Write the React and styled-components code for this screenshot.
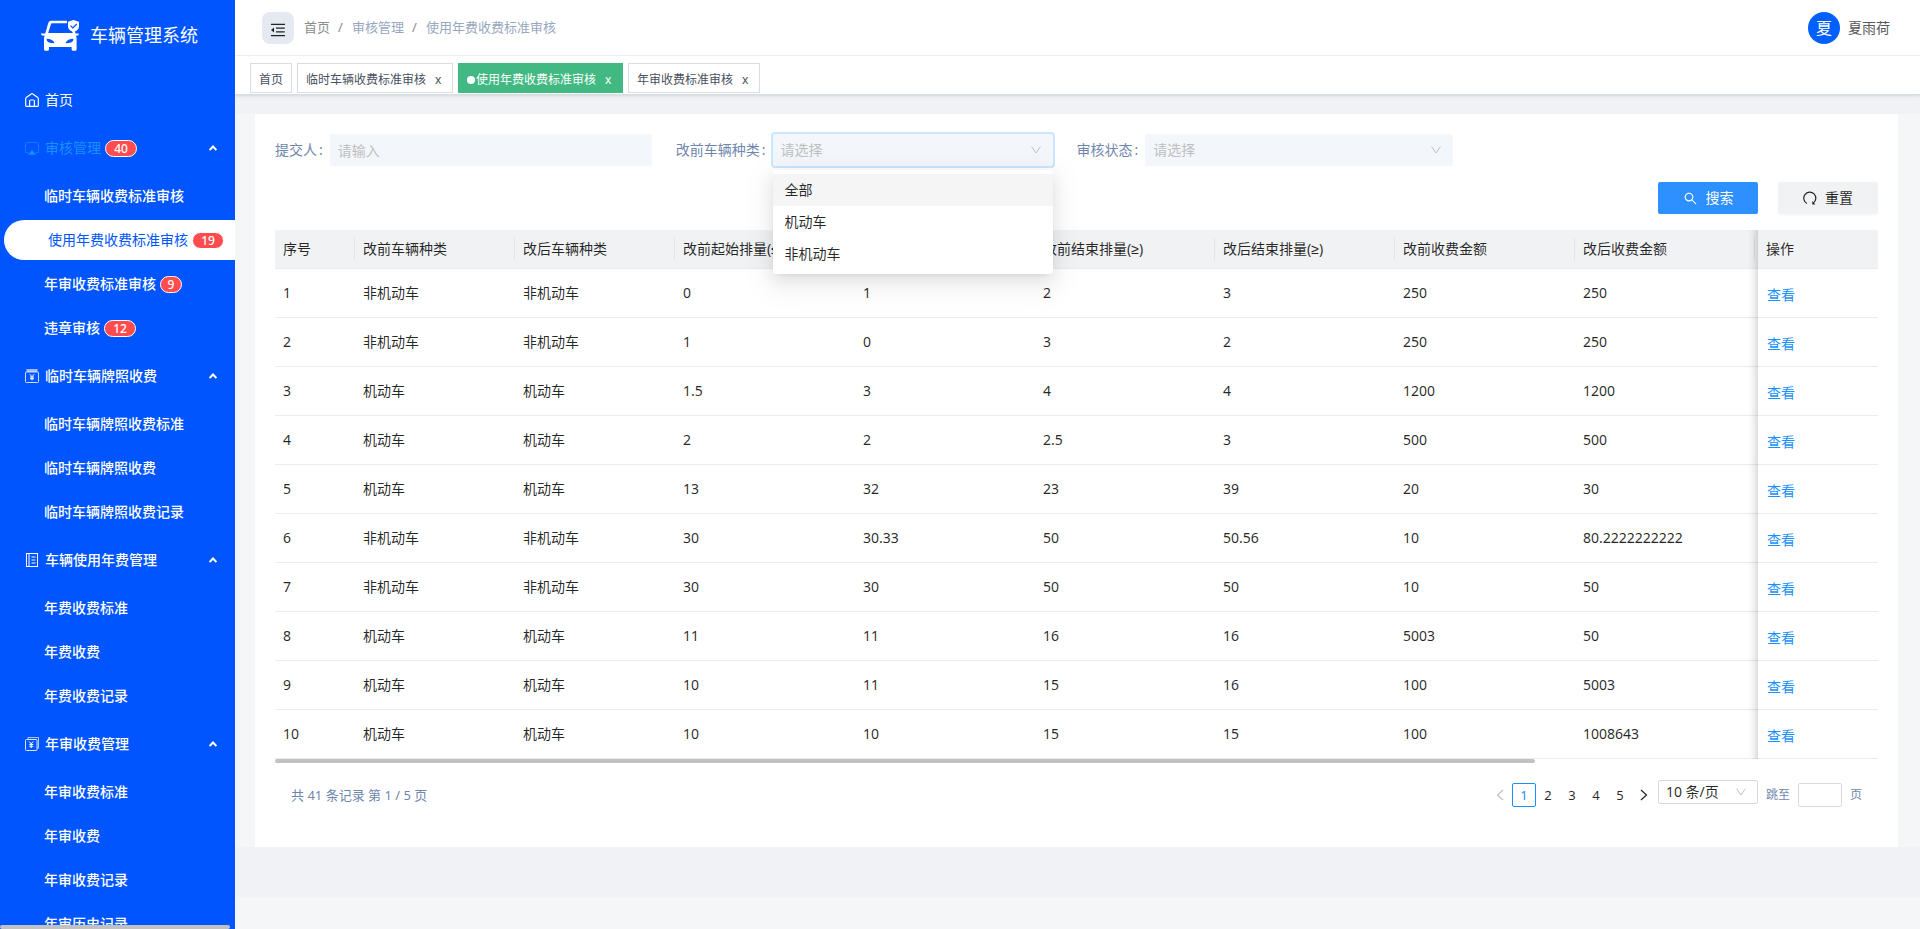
import React from 'react';
import styled, { createGlobalStyle, css } from 'styled-components';
import { AiOutlineMenuFold, AiOutlineSearch } from 'react-icons/ai';

const Global = createGlobalStyle`
  *, *::before, *::after { box-sizing: border-box; }
  body {
    margin: 0;
    background: #f5f6f8;
    color: rgba(0, 0, 0, 0.85);
    font: 14px/22px "Noto Sans", "Liberation Sans", "Noto Sans CJK SC", sans-serif;
  }
  button, input, select { font: inherit; color: inherit; margin: 0; }
  ul { list-style: none; margin: 0; padding: 0; }
  a { color: inherit; text-decoration: none; }
`;

const Page = styled.div`
  display: flex;
  align-items: flex-start;
  min-height: 100vh;
`;

/* ---------- sidebar ---------- */
const Sidebar = styled.aside`
  position: sticky;
  top: 0;
  flex: 0 0 235px;
  height: 100vh;
  overflow: hidden;
  background: #0055ff;
  color: #fff;
`;
const Brand = styled.div`
  display: flex;
  align-items: center;
  gap: 11px;
  height: 70px;
  padding-left: 41px;
  font-size: 18px;
  line-height: 24px;
`;
const Nav = styled.nav`
  display: flex;
  flex-direction: column;
  gap: 8px;
  padding-top: 10px;
  font-weight: 500;
`;
const TopLink = styled.a`
  display: flex;
  align-items: center;
  height: 40px;
  padding-left: 25px;
  gap: 6px;
  font-weight: 400;
`;
const GroupButton = styled.button`
  display: flex;
  align-items: center;
  gap: 6px;
  width: 100%;
  height: 40px;
  padding: 0 18px 0 25px;
  border: 0;
  background: none;
  color: ${(p) => (p.$current ? '#1890ff' : '#fff')};
  font-weight: ${(p) => (p.$current ? 400 : 500)};
  text-align: left;
`;
const GroupText = styled.span`
  display: flex;
  flex: 1;
  align-items: center;
  gap: 4px;
`;
const SubList = styled.ul`
  display: flex;
  flex-direction: column;
  gap: 4px;
  padding-top: 8px;
`;
const SubLink = styled.a`
  display: flex;
  align-items: center;
  gap: 4px;
  height: 40px;
  padding-left: 44px;
  white-space: nowrap;
  ${(p) => p.$active && css`
    margin-left: 4px;
    border-radius: 20px 0 0 20px;
    background: #fff;
    color: #0055ff;
    font-weight: 400;
  `}
`;
const Count = styled.span`
  min-width: ${(p) => (p.$wide ? 32 : 22)}px;
  height: 17px;
  border: 1px solid #fff;
  border-radius: 9px;
  background: #ff4d4f;
  color: #fff;
  font-size: 12px;
  font-weight: 500;
  line-height: 15px;
  text-align: center;
`;
const SideScroll = styled.div`
  position: absolute;
  left: 0;
  bottom: 0;
  width: 230px;
  height: 4px;
  border-radius: 2px;
  background: #c1c1c1;
`;

/* ---------- top area ---------- */
const Main = styled.main`
  flex: 1;
  min-width: 0;
`;
const Layout = styled.div`
  padding-bottom: 50px;
  background: #f0f2f5;
`;
const Header = styled.header`
  display: flex;
  align-items: center;
  height: 56px;
  padding: 0 30px 0 27px;
  border-bottom: 1px solid #f3f3f4;
  background: #fff;
`;
const FoldButton = styled.button`
  display: flex;
  align-items: center;
  justify-content: center;
  width: 32px;
  height: 32px;
  padding: 4px 0 0;
  border: 0;
  border-radius: 8px;
  background: #e4e9f2;
`;
const Crumbs = styled.nav`
  display: flex;
  flex: 1;
  gap: 8px;
  padding: 0 0 2px 10px;
  color: #97a8be;
  font-size: 13px;
`;
const Crumb = styled.a`
  color: ${(p) => (p.$home ? '#8c8c8c' : '#97a8be')};
`;
const Slash = styled.span`
  min-width: 6px;
  color: #8c8c8c;
`;
const User = styled.div`
  display: flex;
  align-items: center;
  gap: 8px;
  color: #595959;
`;
const Avatar = styled.span`
  width: 32px;
  height: 32px;
  border-radius: 50%;
  background: #0060ff;
  color: #fff;
  font-size: 16px;
  line-height: 32px;
  text-align: center;
`;
const Tabs = styled.div`
  display: flex;
  gap: 5px;
  padding: 7px 15px 1px;
  border-bottom: 1px solid #d8dce5;
  box-shadow: 0 1px 3px rgba(0, 0, 0, 0.12);
  background: #fff;
`;
const Tab = styled.div`
  display: flex;
  align-items: center;
  height: 30px;
  padding: 4px 8px 0;
  border: 1px solid ${(p) => (p.$active ? '#42b983' : '#d8dce5')};
  background: ${(p) => (p.$active ? '#42b983' : '#fff')};
  color: ${(p) => (p.$active ? '#fff' : '#495060')};
  font-size: 12px;
`;
const TabDot = styled.span`
  width: 8px;
  height: 8px;
  margin-right: 1px;
  border-radius: 50%;
  background: #fff;
`;
const TabClose = styled.button`
  width: 18px;
  padding: 0 3px 0 9px;
  border: 0;
  background: none;
  line-height: 20px;
`;

/* ---------- card and search form ---------- */
const Content = styled.div`
  margin-top: 19px;
  padding: 0 22px 0 20px;
  background: #f5f6f8;
`;
const Card = styled.section`
  padding: 20px 20px 40px;
  background: #fff;
`;
const Form = styled.form`
  display: grid;
  grid-template-columns: repeat(4, 1fr);
`;
const Field = styled.div`
  display: flex;
  align-items: center;
  padding-right: 24px;
  color: #6f86ad;
`;
const Label = styled.label`
  padding-right: 7px;
  white-space: nowrap;
`;
const Colon = styled.span`
  padding-left: 2px;
`;
const control = css`
  width: 100%;
  height: 32px;
  padding: 0 8px;
  border: 0;
  border-radius: 2px;
  outline: 0;
  background: #f3f6fb;
  color: #bfbfbf;
`;
const TextInput = styled.input`
  ${control}
  flex: 1;
  min-width: 0;
  &::placeholder { color: #bfbfbf; }
`;
const SelectBox = styled.div`
  position: relative;
  flex: 1;
  min-width: 0;
  display: flex;
`;
const SelectInput = styled.select`
  ${control}
  appearance: none;
  ${(p) => p.$open && css`box-shadow: 0 0 0 2px #cce6ff;`}
`;
const SelectArrow = styled.span`
  position: absolute;
  top: 0;
  right: 12px;
  display: flex;
  align-items: center;
  height: 100%;
  color: #bfbfbf;
  pointer-events: none;
`;
const Options = styled.ul`
  position: absolute;
  z-index: 10;
  top: 36px;
  left: 0;
  width: 100%;
  padding: 4px 0;
  border-radius: 2px;
  background: #fff;
  box-shadow: 0 3px 6px -4px rgba(0, 0, 0, 0.12), 0 6px 16px rgba(0, 0, 0, 0.08), 0 9px 28px 8px rgba(0, 0, 0, 0.05);
  color: rgba(0, 0, 0, 0.85);
`;
const Option = styled.li`
  padding: 5px 12px;
  background: ${(p) => (p.$active ? '#f5f5f5' : '#fff')};
`;
const Actions = styled.div`
  grid-column: 1 / -1;
  display: flex;
  justify-content: flex-end;
  gap: 20px;
  padding: 16px 0;
`;
const ActionButton = styled.button`
  display: flex;
  align-items: center;
  justify-content: center;
  gap: 8px;
  width: 100px;
  height: 32px;
  border: 0;
  border-radius: 2px;
  background: ${(p) => (p.$primary ? '#2e8fff' : '#f1f2f4')};
  box-shadow: 0 2px 0 rgba(0, 0, 0, 0.02);
  color: ${(p) => (p.$primary ? '#fff' : 'rgba(0, 0, 0, 0.85)')};
`;

/* ---------- table ---------- */
const TableWrap = styled.div`
  overflow: hidden;
`;
const Table = styled.table`
  width: 100%;
  min-width: 1600px;
  table-layout: fixed;
  border-collapse: separate;
  border-spacing: 0;
`;
const Col = styled.col`
  width: ${(p) => (p.$w ? `${p.$w}px` : 'auto')};
`;
const pinned = css`
  position: sticky;
  right: 0;
  &::before {
    content: "";
    position: absolute;
    top: 0;
    bottom: -1px;
    left: -30px;
    width: 30px;
    box-shadow: inset -10px 0 8px -8px rgba(0, 0, 0, 0.2);
    pointer-events: none;
  }
`;
const Th = styled.th`
  position: relative;
  height: 39px;
  padding: 0 8px;
  border-bottom: 1px solid #ebecee;
  background: #f1f2f4;
  font-weight: 400;
  text-align: left;
  white-space: nowrap;
  ${(p) => p.$divided && css`
    &::after {
      content: "";
      position: absolute;
      top: 8px;
      right: 0;
      width: 1px;
      height: 22px;
      background: #e3e4e7;
    }
  `}
  ${(p) => p.$pinned && pinned}
`;
const Td = styled.td`
  height: 49px;
  padding: 0 8px;
  border-bottom: 1px solid #ececec;
  background: #fff;
  ${(p) => p.$pinned && pinned}
`;
const Spacer = styled.td`
  border-bottom: 1px solid ${(p) => (p.$head ? '#ebecee' : '#ececec')};
  background: ${(p) => (p.$head ? '#f1f2f4' : '#fff')};
`;
const ViewLink = styled.a`
  display: block;
  padding: 3px 0 0 1px;
  color: #1890ff;
`;
const ScrollThumb = styled.div`
  width: 78.6%;
  height: 4px;
  border-radius: 2px;
  background: #c1c1c1;
`;

/* ---------- pagination ---------- */
const Footer = styled.div`
  display: flex;
  align-items: center;
  justify-content: space-between;
  padding: 20px 16px 0;
  color: #6f86ad;
  font-size: 13px;
`;
const Pager = styled.div`
  display: flex;
  align-items: center;
  font-size: 12px;
`;
const PageButton = styled.button`
  display: flex;
  align-items: center;
  justify-content: center;
  width: 24px;
  height: 24px;
  padding: 0;
  border: ${(p) => (p.$active ? '1px solid #1890ff' : '0')};
  border-radius: 2px;
  background: #fff;
  color: ${(p) => (p.$active ? '#1890ff' : p.$off ? 'rgba(0, 0, 0, 0.25)' : 'rgba(0, 0, 0, 0.85)')};
  font-size: 13px;
`;
const SizeBox = styled.div`
  position: relative;
  align-self: flex-start;
  width: 100px;
  height: 24px;
  margin: -3px 8px 3px 2px;
`;
const SizeSelect = styled.select`
  appearance: none;
  width: 100%;
  height: 24px;
  padding: 0 7px;
  border: 1px solid #d9d9d9;
  border-radius: 2px;
  background: #fff;
  color: rgba(0, 0, 0, 0.85);
  font-size: 14px;
`;
const JumpLabel = styled.label`
  display: flex;
  align-items: center;
  gap: 8px;
`;
const JumpInput = styled.input`
  width: 44px;
  height: 24px;
  border: 1px solid #d9d9d9;
  border-radius: 2px;
`;

/* ---------- icons ---------- */
const Stroke = ({ children, w = 1.2, size = 14, box = 14 }) => (
  <svg width={size} height={size} viewBox={`0 0 ${box} ${box}`} fill="none" stroke="currentColor" strokeWidth={w} aria-hidden="true">
    {children}
  </svg>
);
const icons = {
  home: (
    <Stroke>
      <path d="M.7 5.600Q.7 5 1.200 4.600L6.200.9q.8-.5 1.600 0l5 3.700q.5.4.5 1v6.800q0 1-1 1H1.700q-1 0-1-1z" />
      <path d="M4.600 13.400V8q0-1 1-1h2.800q1 0 1 1v5.400" />
    </Stroke>
  ),
  review: (
    <Stroke w={1}>
      <path d="M3.500 11.500H1.500q-1 0-1-1v-8q0-1 1-1h11q1 0 1 1v8q0 1-1 1h-2" opacity=".7" />
      <path d="m7 9 4 4.800H3z" fill="currentColor" stroke="none" />
    </Stroke>
  ),
  box: (
    <Stroke w={1}>
      <path d="M1.500 1.500h11" strokeWidth="3" opacity=".6" />
      <rect x=".5" y="3" width="13" height="10.500" rx="1" opacity=".8" />
      <path d="m4.800 5.200 2.200 2.400 2.200-2.400M7 7.600v3.800M5 8h4M5 9.700h4" />
    </Stroke>
  ),
  book: (
    <Stroke w={1}>
      <rect x="1.500" y=".5" width="11" height="13" />
      <path d="M4 .5v13M6.500 4h4M6.500 7h4M6.500 10h4" />
    </Stroke>
  ),
  stack: (
    <Stroke w={1}>
      <path d="M3 2.500V.6h10.500v10.500h-1.500" opacity=".7" />
      <rect x=".5" y="2.500" width="11.500" height="11" rx="1" opacity=".85" />
      <path d="m4.200 4.500 2 2.400 2-2.400M6.200 6.900v4.200M4.300 7.400h4M4.300 9.300h4" />
    </Stroke>
  ),
};
const Caret = () => (
  <svg width="8" height="6" viewBox="0 0 8 6" fill="none" stroke="#fff" strokeWidth="2" aria-hidden="true">
    <path d="m.6 5 3.400-3.500L7.400 5" />
  </svg>
);
const Down = () => (
  <svg width="10" height="8" viewBox="0 0 10 8" fill="none" stroke="currentColor" aria-hidden="true">
    <path d="m.5.6 4.500 6.400L9.500.6" />
  </svg>
);
const Arrow = ({ d }) => (
  <svg width="8" height="12" viewBox="0 0 8 12" fill="none" stroke="currentColor" strokeWidth="1.200" aria-hidden="true">
    <path d={d} />
  </svg>
);
const Reset = () => (
  <svg width="14" height="14" viewBox="0 0 14 14" fill="none" stroke="currentColor" strokeWidth="1.200" aria-hidden="true">
    <path d="M4 12.500A6 6 0 1 1 10.400 12" />
    <path d="M9.300 10v3.500h3z" fill="currentColor" stroke="none" />
  </svg>
);
const CarLogo = () => (
  <svg width="38" height="31" viewBox="0 0 38 31" aria-hidden="true">
    <path fill="#fff" fillRule="evenodd" d="M10 .8h16v2.400H11.200q-1 0-1.300 1L7.200 13h24.600l-.8-2.500h2.600l1 3h3q.5 1.500-.8 2l-2 .3q.8 1.200.8 3v10.500q0 1.500-1.500 1.500h-2q-1.500 0-1.500-1.500V27H8v2.300q0 1.500-1.500 1.500h-2Q3 30.800 3 29.300V18.500q0-1.500.8-2.700l-2.500-.3Q-.2 15 0 13.500h4.200L7.300 3Q8 .8 10 .8zM5.500 18.700q0 4.600 8 4.600-1.500-4.600-8-4.600zm27 0q-6.500 0-8 4.600 8 0 8-4.600z" />
    <path fill="#fff" d="M32.500 0 38 1.800v4.700q0 3.500-5.500 5.500Q27 10 27 6.500V1.800z" />
    <path d="m29.500 5.600 2.300 2.300 4-3.900" fill="none" stroke="#0055ff" strokeWidth="1.300" />
  </svg>
);

/* ---------- data ---------- */
const groups = [
  { title: '审核管理', icon: 'review', count: 40, current: true, items: [
    ['临时车辆收费标准审核'], ['使用年费收费标准审核', 19, true], ['年审收费标准审核', 9], ['违章审核', 12]] },
  { title: '临时车辆牌照收费', icon: 'box', items: [['临时车辆牌照收费标准'], ['临时车辆牌照收费'], ['临时车辆牌照收费记录']] },
  { title: '车辆使用年费管理', icon: 'book', items: [['年费收费标准'], ['年费收费'], ['年费收费记录']] },
  { title: '年审收费管理', icon: 'stack', items: [['年审收费标准'], ['年审收费'], ['年审收费记录'], ['年审历史记录']] },
];
const tabs = [
  { name: '首页', fixed: true },
  { name: '临时车辆收费标准审核' },
  { name: '使用年费收费标准审核', active: true },
  { name: '年审收费标准审核' },
];
const columns = [
  ['序号', 80], ['改前车辆种类', 160], ['改后车辆种类', 160], ['改前起始排量(≤)', 180], ['改后起始排量(≤)', 180],
  ['改前结束排量(≥)', 180], ['改后结束排量(≥)', 180], ['改前收费金额', 180], ['改后收费金额', 180],
];
const rows = [
  ['1', '非机动车', '非机动车', '0', '1', '2', '3', '250', '250'],
  ['2', '非机动车', '非机动车', '1', '0', '3', '2', '250', '250'],
  ['3', '机动车', '机动车', '1.5', '3', '4', '4', '1200', '1200'],
  ['4', '机动车', '机动车', '2', '2', '2.5', '3', '500', '500'],
  ['5', '机动车', '机动车', '13', '32', '23', '39', '20', '30'],
  ['6', '非机动车', '非机动车', '30', '30.33', '50', '50.56', '10', '80.2222222222'],
  ['7', '非机动车', '非机动车', '30', '30', '50', '50', '10', '50'],
  ['8', '机动车', '机动车', '11', '11', '16', '16', '5003', '50'],
  ['9', '机动车', '机动车', '10', '11', '15', '16', '100', '5003'],
  ['10', '机动车', '机动车', '10', '10', '15', '15', '100', '1008643'],
];

const Badge = ({ value }) => <Count $wide={value > 9}>{value}</Count>;

const NavGroup = ({ group }) => (
  <div>
    <GroupButton type="button" aria-expanded="true" $current={group.current}>
      {icons[group.icon]}
      <GroupText>
        {group.title}
        {group.count && <Badge value={group.count} />}
      </GroupText>
      <Caret />
    </GroupButton>
    <SubList>
      {group.items.map(([name, count, active]) => (
        <li key={name}>
          <SubLink href="#" $active={active}>
            {name}
            {count && <Badge value={count} />}
          </SubLink>
        </li>
      ))}
    </SubList>
  </div>
);

const FieldLabel = ({ htmlFor, children }) => (
  <Label htmlFor={htmlFor}>{children}<Colon>:</Colon></Label>
);

export default function App() {
  return (
    <Page>
      <Global />
      <Sidebar>
        <Brand><CarLogo />车辆管理系统</Brand>
        <Nav>
          <TopLink href="#">{icons.home}首页</TopLink>
          {groups.map((g) => <NavGroup key={g.title} group={g} />)}
        </Nav>
        <SideScroll />
      </Sidebar>
      <Main>
        <Layout>
          <Header>
            <FoldButton type="button" aria-label="收起菜单"><AiOutlineMenuFold size={18} /></FoldButton>
            <Crumbs>
              <Crumb href="#" $home>首页</Crumb>
              <Slash>/</Slash>
              <Crumb href="#">审核管理</Crumb>
              <Slash>/</Slash>
              <Crumb href="#">使用年费收费标准审核</Crumb>
            </Crumbs>
            <User><Avatar>夏</Avatar>夏雨荷</User>
          </Header>
          <Tabs>
            {tabs.map((t) => (
              <Tab key={t.name} $active={t.active}>
                {t.active && <TabDot />}
                {t.name}
                {!t.fixed && <TabClose type="button">x</TabClose>}
              </Tab>
            ))}
          </Tabs>
          <Content>
            <Card>
              <Form onSubmit={(e) => e.preventDefault()}>
                <Field>
                  <FieldLabel htmlFor="submitter">提交人</FieldLabel>
                  <TextInput id="submitter" placeholder="请输入" />
                </Field>
                <Field>
                  <FieldLabel htmlFor="kind">改前车辆种类</FieldLabel>
                  <SelectBox>
                    <SelectInput id="kind" $open><option>请选择</option></SelectInput>
                    <SelectArrow><Down /></SelectArrow>
                    <Options role="listbox">
                      <Option role="option" $active>全部</Option>
                      <Option role="option">机动车</Option>
                      <Option role="option">非机动车</Option>
                    </Options>
                  </SelectBox>
                </Field>
                <Field>
                  <FieldLabel htmlFor="status">审核状态</FieldLabel>
                  <SelectBox>
                    <SelectInput id="status"><option>请选择</option></SelectInput>
                    <SelectArrow><Down /></SelectArrow>
                  </SelectBox>
                </Field>
                <Actions>
                  <ActionButton type="submit" $primary><AiOutlineSearch size={15} />搜索</ActionButton>
                  <ActionButton type="reset"><Reset />重置</ActionButton>
                </Actions>
              </Form>
              <TableWrap>
                <Table>
                  <colgroup>
                    {columns.map(([name, w]) => <Col key={name} $w={w} />)}
                    <Col />
                    <Col $w={120} />
                  </colgroup>
                  <thead>
                    <tr>
                      {columns.map(([name]) => <Th key={name} $divided>{name}</Th>)}
                      <Spacer $head />
                      <Th $pinned>操作</Th>
                    </tr>
                  </thead>
                  <tbody>
                    {rows.map((row) => (
                      <tr key={row[0]}>
                        {row.map((cell, i) => <Td key={i}>{cell}</Td>)}
                        <Spacer />
                        <Td $pinned><ViewLink href="#">查看</ViewLink></Td>
                      </tr>
                    ))}
                  </tbody>
                </Table>
              </TableWrap>
              <ScrollThumb />
              <Footer>
                <span>共 41 条记录 第 1 / 5 页</span>
                <Pager>
                  <PageButton type="button" aria-label="上一页" $off><Arrow d="M7 1 1.500 6 7 11" /></PageButton>
                  {[1, 2, 3, 4, 5].map((n) => (
                    <PageButton key={n} type="button" $active={n === 1}>{n}</PageButton>
                  ))}
                  <PageButton type="button" aria-label="下一页"><Arrow d="m1 1 5.500 5L1 11" /></PageButton>
                  <SizeBox>
                    <SizeSelect aria-label="每页条数"><option>10 条/页</option></SizeSelect>
                    <SelectArrow><Down /></SelectArrow>
                  </SizeBox>
                  <JumpLabel>跳至<JumpInput />页</JumpLabel>
                </Pager>
              </Footer>
            </Card>
          </Content>
        </Layout>
      </Main>
    </Page>
  );
}
